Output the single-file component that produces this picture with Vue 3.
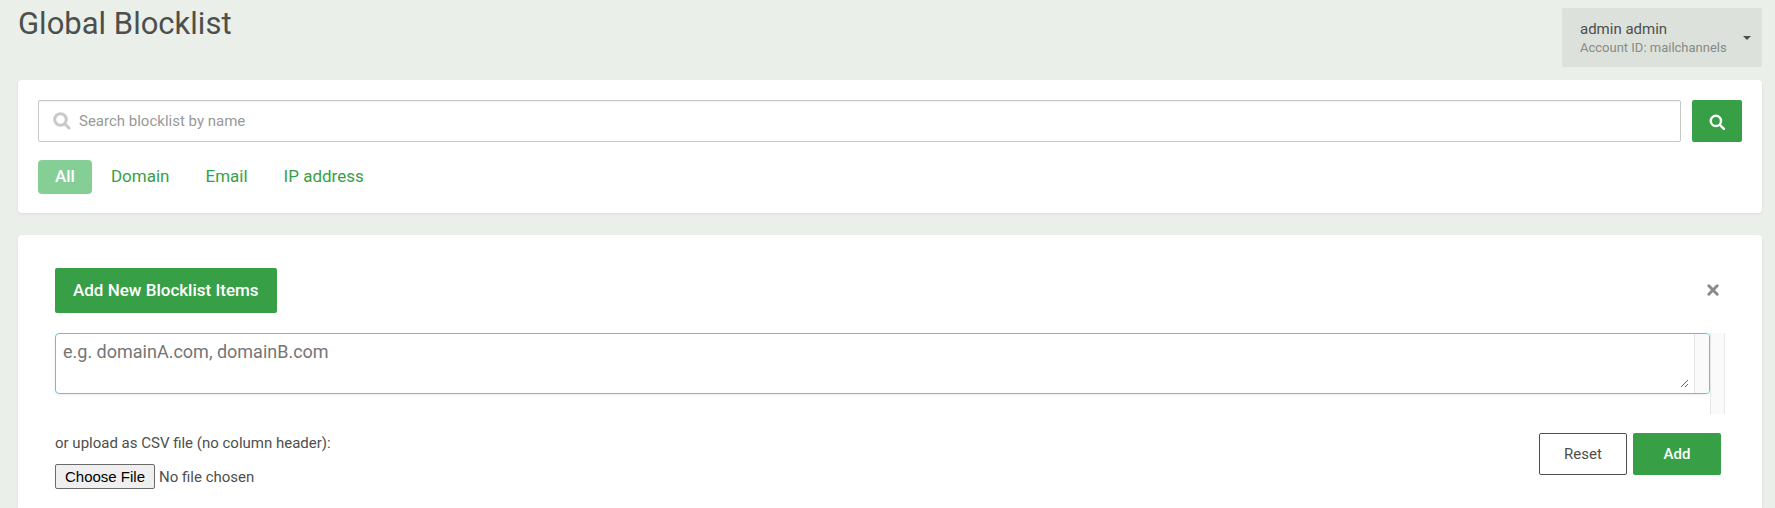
<script setup>
import { ref } from 'vue'

const filters = ['All', 'Domain', 'Email', 'IP address']
const activeFilter = ref('All')
const search = ref('')
const items = ref('')
const showForm = ref(true)

function reset() {
  items.value = ''
}
</script>

<template>
  <div class="page">
    <header class="header">
      <h1>Global Blocklist</h1>
      <button class="account" type="button">
        <span class="account-text">
          <span class="account-name">admin admin</span>
          <span class="account-id">Account ID: mailchannels</span>
        </span>
        <span class="caret"></span>
      </button>
    </header>

    <section class="card search-card">
      <form class="search" @submit.prevent>
        <label class="search-box">
          <svg class="search-icon" viewBox="0 0 18 18" width="18" height="18">
            <circle cx="7.5" cy="7.5" r="5.8" />
            <path d="M12 12l4 4" />
          </svg>
          <input v-model="search" type="text" placeholder="Search blocklist by name" aria-label="Search blocklist by name" />
        </label>
        <button class="btn search-btn" type="submit" aria-label="Search">
          <svg class="search-icon" viewBox="0 0 18 18" width="17" height="17">
            <circle cx="7.3" cy="7.3" r="5.4" />
            <path d="M12 12l3.8 3.8" />
          </svg>
        </button>
      </form>
      <nav class="filters">
        <button
          v-for="f in filters"
          :key="f"
          type="button"
          :class="['filter', { active: f === activeFilter }]"
          @click="activeFilter = f"
        >{{ f }}</button>
      </nav>
    </section>

    <section class="card add-card">
      <div class="add-head">
        <button class="btn add-new" type="button" @click="showForm = true">Add New Blocklist Items</button>
        <button class="close" type="button" aria-label="Close" @click="showForm = false">
          <svg viewBox="0 0 14 14" width="14" height="14">
            <path d="M2.8 2.8l8.4 8.4M11.2 2.8l-8.4 8.4" />
          </svg>
        </button>
      </div>
      <form v-if="showForm" @submit.prevent>
        <div class="editor">
          <div class="editor-box">
            <textarea v-model="items" placeholder="e.g. domainA.com, domainB.com" aria-label="Blocklist items"></textarea>
            <span class="track"></span>
          </div>
          <span class="track outer"></span>
        </div>
        <div class="add-foot">
          <div class="upload">
            <label for="csv">or upload as CSV file (no column header):</label>
            <input id="csv" type="file" accept=".csv" />
          </div>
          <div class="actions">
            <button class="btn outline" type="button" @click="reset">Reset</button>
            <button class="btn" type="submit">Add</button>
          </div>
        </div>
      </form>
    </section>
  </div>
</template>

<style>
body {
  margin: 0;
  background: #eaefe9;
}
</style>

<style scoped>
.page,
.page * {
  box-sizing: border-box;
}

.page {
  min-height: 100vh;
  display: flex;
  flex-direction: column;
  padding: 8px 13px 0 18px;
  font-family: Roboto, "Liberation Sans", sans-serif;
  font-size: 15px;
  color: #4d4f4d;
}

button,
input,
textarea {
  font-family: inherit;
  color: inherit;
}

button {
  cursor: pointer;
}

.header {
  display: flex;
  justify-content: space-between;
  align-items: flex-start;
  margin-bottom: 13px;
}

h1 {
  margin: 0;
  font-size: 31px;
  line-height: 32px;
  font-weight: 400;
}

.account {
  width: 200px;
  height: 59px;
  display: flex;
  align-items: center;
  justify-content: space-between;
  padding: 0 11px 0 18px;
  border: 0;
  border-radius: 2px;
  background: #dce1dc;
  text-align: left;
}

.account-text {
  display: flex;
  flex-direction: column;
}

.account-name {
  font-size: 15px;
  line-height: 20px;
}

.account-id {
  font-size: 13px;
  line-height: 18px;
  color: #868c86;
}

.caret {
  border: 4px solid transparent;
  border-top-color: #4d4f4d;
  border-bottom: 0;
}

.card {
  background: #fff;
  border-radius: 4px;
  box-shadow: 0 1px 3px rgba(0, 0, 0, 0.08);
}

.search-card {
  padding: 20px 20px 19px;
  margin-bottom: 22px;
}

.search {
  display: flex;
  gap: 11px;
}

.search-box {
  flex: 1;
  height: 42px;
  display: flex;
  align-items: center;
  gap: 8px;
  padding-left: 14px;
  border: 1px solid #c6c8c6;
  border-radius: 2px;
  box-shadow: inset 0 1px 1px rgba(0, 0, 0, 0.06);
}

.search-box input {
  flex: 1;
  border: 0;
  outline: 0;
  padding: 0;
  background: none;
  font-size: 15px;
}

.search-box input::placeholder {
  color: #999;
}

.search-icon {
  fill: none;
  stroke: #c9c9c9;
  stroke-width: 3;
  stroke-linecap: round;
}

.btn {
  width: 88px;
  height: 42px;
  padding: 0;
  border: 0;
  border-radius: 2px;
  background: #37a047;
  color: #fff;
  font-size: 15px;
  font-weight: 500;
}

.search-btn {
  width: 50px;
  display: flex;
  align-items: center;
  justify-content: center;
  padding-top: 2px;
}

.search-btn .search-icon {
  stroke: #fff;
  stroke-width: 2.6;
}

.filters {
  display: flex;
  gap: 2px;
  margin-top: 18px;
}

.filter {
  height: 34px;
  padding: 0 17px 2px;
  border: 0;
  border-radius: 4px;
  background: none;
  color: #37a047;
  font-size: 17px;
}

.filter.active {
  background: #85ce96;
  color: #fff;
  font-weight: 500;
}

.add-card {
  flex: 1;
  padding: 33px 37px 20px;
  border-radius: 4px 4px 0 0;
}

.add-head {
  display: flex;
  align-items: center;
  justify-content: space-between;
  margin-bottom: 20px;
}

.add-new {
  width: auto;
  height: 45px;
  padding: 0 18px 2px;
  font-size: 17px;
}

.close {
  display: flex;
  padding: 0 0 2px;
  margin-right: 5px;
  border: 0;
  background: none;
}

.close path {
  fill: none;
  stroke: #868c86;
  stroke-width: 3;
  stroke-linecap: round;
}

.editor {
  height: 81px;
  display: flex;
  align-items: flex-start;
}

.editor-box {
  flex: 1;
  display: flex;
  border: 1px solid #66bfdf;
  border-radius: 4px;
  box-shadow: 0 1px 3px rgba(0, 0, 0, 0.08);
}

.editor-box textarea {
  flex: 1;
  height: 54px;
  margin: 0 5px 5px 0;
  padding: 6px 7px;
  border: 0;
  outline: 0;
  background: none;
  font-size: 18px;
  line-height: 24px;
  resize: vertical;
}

.editor-box textarea::placeholder {
  color: #757575;
}

.track {
  width: 15px;
  align-self: stretch;
  background: #fafafa;
  border-left: 1px solid #e4e4e4;
  border-radius: 0 3px 3px 0;
}

.track.outer {
  border-right: 1px solid #e8e8e8;
  border-radius: 0;
}

.add-foot {
  display: flex;
  justify-content: space-between;
  margin-top: 19px;
  padding-right: 4px;
}

.upload {
  display: flex;
  flex-direction: column;
  gap: 11px;
  font-size: 15px;
  line-height: 20px;
}

.upload input {
  font-size: 15px;
}

.upload input::file-selector-button {
  height: 25px;
  padding: 0 9px 1px;
  border: 1px solid #6b6b6b;
  border-radius: 2px;
  background: #efefef;
  color: #000;
  font-family: "Liberation Sans", Arial, sans-serif;
  font-size: 15px;
}

.actions {
  display: flex;
  gap: 6px;
}

.outline {
  border: 1px solid #4d4f4d;
  background: #fff;
  color: #4d4f4d;
  font-weight: 400;
}
</style>
